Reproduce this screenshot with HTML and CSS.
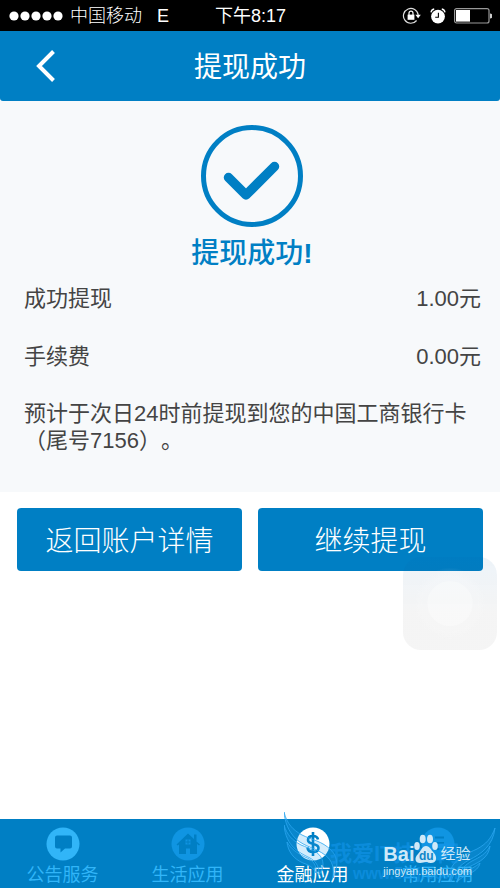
FILE: index.html
```html
<!DOCTYPE html>
<html lang="zh-CN">
<head>
<meta charset="utf-8">
<meta name="viewport" content="width=device-width, initial-scale=1">
<title>提现成功</title>
<link rel="stylesheet" href="styles.css">
</head>
<body>
<div class="status">
  <div class="status-left">
    <svg class="signal" viewBox="0 0 54 10" aria-hidden="true"><g fill="#fff"><circle cx="5" cy="5" r="4.6"/><circle cx="16" cy="5" r="4.6"/><circle cx="27" cy="5" r="4.6"/><circle cx="38" cy="5" r="4.6"/><circle cx="49" cy="5" r="4.6"/></g></svg>
    <span>中国移动</span>
    <span class="network">E</span>
  </div>
  <time class="clock">下午8:17</time>
  <div class="status-right">
    <svg class="lock" viewBox="0 0 20 18" aria-hidden="true"><path d="M14.600 13.500A7.400 7.400 0 1 1 16.200 8" fill="none" stroke="#ddd" stroke-width="1.200"/><path d="M13.400 7.800h5.400l-2.700 3.400z" fill="#fff"/><rect x="5.600" y="7.600" width="6.800" height="5.200" fill="#fff"/><path d="M7 8V6.200a2 2 0 0 1 4 0V8" fill="none" stroke="#fff" stroke-width="1.200"/></svg>
    <svg class="alarm" viewBox="0 0 16 16" aria-hidden="true"><circle cx="8" cy="8.600" r="6.900" fill="#fff"/><path d="M1 4.400A4 4 0 0 1 4.200 1M15 4.400A4 4 0 0 0 11.800 1" fill="none" stroke="#fff" stroke-width="1.300"/><path d="M8.400 4.800v4.400H5.200" fill="none" stroke="#000" stroke-width="1.100"/></svg>
    <svg class="battery" viewBox="0 0 38 16" aria-hidden="true"><rect x=".6" y=".6" width="34.400" height="14.400" rx="2" fill="none" stroke="#999" stroke-width="1.200"/><rect x="2" y="2" width="14" height="11.600" fill="#fff"/><path d="M36 5.500a2.500 2.500 0 0 1 0 5z" fill="#ccc"/></svg>
  </div>
</div>
<header class="header">
  <button class="back" type="button" aria-label="返回"><svg viewBox="0 0 20 32" aria-hidden="true"><path d="M17.500 1.500L3 16l14.500 14.500" fill="none" stroke="#fff" stroke-width="4"/></svg></button>
  <h1>提现成功</h1>
</header>
<main>
  <section class="panel">
    <div class="result">
      <svg class="check" viewBox="0 0 102 102" aria-hidden="true"><circle cx="51" cy="51" r="48.500" fill="none" stroke="#007fc4" stroke-width="5"/><path d="M27.500 52.500L45 70L73.500 41.500" fill="none" stroke="#007fc4" stroke-width="9.500" stroke-linecap="round" stroke-linejoin="round"/></svg>
      <h2>提现成功<b>!</b></h2>
    </div>
    <dl>
      <div class="row"><dt>成功提现</dt><dd>1.00元</dd></div>
      <div class="row"><dt>手续费</dt><dd>0.00元</dd></div>
    </dl>
    <p class="note">预计于次日24时前提现到您的中国工商银行卡（尾号7156）。</p>
  </section>
  <div class="actions">
    <button type="button">返回账户详情</button>
    <button type="button">继续提现</button>
    <div class="assist"></div>
  </div>
</main>
<nav class="tabs">
  <a href="#notice"><svg viewBox="0 0 34 34" aria-hidden="true"><circle cx="17" cy="17" r="16.500" fill="#31b5f8"/><path d="M11 8.500h13a2 2 0 0 1 2 2v9a2 2 0 0 1-2 2h-5l-4.500 4v-4H11a2 2 0 0 1-2-2v-9a2 2 0 0 1 2-2z" fill="#007fc4"/></svg><span>公告服务</span></a>
  <a href="#life"><svg viewBox="0 0 34 34" aria-hidden="true"><circle cx="17" cy="17" r="16.500" fill="#1095e2"/><path d="M5.500 17.500L17 6.500l6 5.500V7.500h2.500v7l3.500 3-1 1-2-1.500V27h-7v-5.500h-4V27H8v-9.500L6.500 18.500z" fill="#007fc4"/><path d="M14.500 12.500h5v5h-5z" fill="#1095e2"/><path d="M17 12.500v5M14.500 15h5" stroke="#007fc4"/></svg><span>生活应用</span></a>
  <a class="active" href="#finance"><svg viewBox="0 0 34 34" aria-hidden="true"><circle cx="17" cy="17" r="16.500" fill="#fff"/><path d="M22 12.500c-.5-2.500-2.500-3.500-5-3.500-3 0-5 1.500-5 4 0 5.500 10.500 2.500 10.500 8 0 2.500-2.200 4-5.500 4-3 0-5.200-1.500-5.500-4.500M17 5v24" fill="none" stroke="#007fc4" stroke-width="2.600"/></svg><span>金融应用</span></a>
  <a href="#common"><svg viewBox="0 0 34 34" aria-hidden="true"><circle cx="17" cy="17" r="16.500" fill="#1095e2"/><path d="M14 10.500h9M14 16h9M14 22h9" stroke="#007fc4" stroke-width="2"/></svg><span>常用应用</span></a>
  <div class="watermark" aria-hidden="true">
    <svg viewBox="0 0 216 74">
      <g fill="#2ba6f0" fill-opacity=".2" stroke="#2ba6f0" stroke-opacity=".8">
        <path d="M0 0C3 12 9 18 18 23c10 5 20 6 29 15 8 8 7 18 2 28 1-10 0-17-8-23-9-7-20-8-29-16C4 19 1 10 0 0z"/>
        <path d="M0 13c3 10 8 15 17 20 10 4 18 7 21 14 2 6 1 10-3 16 0-8-2-13-9-17C16 41 2 35 0 13z"/>
        <path d="M3 30c4 7 10 11 18 15 8 3 12 8 11 16-3-6-7-8-13-10C10 47 4 40 3 30z"/>
        <path d="M211 16c-4 11-9 16-18 21-9 4-19 9-24 16-3 5-4 10-2 17 3-11 9-17 18-22 12-6 24-14 26-32z"/>
        <path d="M206 34c-4 8-10 11-18 15-7 4-11 8-13 14 5-6 10-8 16-11 8-4 14-9 15-18z"/>
        <path d="M196 51c-5 4-9 6-14 8-5 3-8 6-9 11 5-5 8-6 12-8 6-3 10-6 11-11z"/>
      </g>
    </svg>
    <span class="site-name">我爱IT技术网</span>
    <span class="site-url">www.52ij.com</span>
  </div>
  <div class="credit" aria-hidden="true">
    <div class="brand"><span>Bai</span><svg viewBox="0 0 24 30"><g fill="#cfe9f8"><ellipse cx="3" cy="12" rx="2.800" ry="4"/><ellipse cx="8.700" cy="5" rx="3" ry="4.300"/><ellipse cx="16" cy="5" rx="3" ry="4.300"/><ellipse cx="21" cy="12" rx="2.800" ry="4"/><path d="M12 12c4 0 5 4 8 7 4 5 2 10-3 10-3 0-3-1-5-1s-3 1-6 1c-5 0-6-5-2-9 3-3 4-8 8-8z"/></g><text class="paw-text" x="5" y="26">du</text></svg><span class="brand-cn">经验</span></div>
    <div class="address">jingyan.baidu.com</div>
  </div>
</nav>
</body>
</html>
```
FILE: styles.css
```css
* { box-sizing: border-box; }
body {
  margin: 0;
  min-height: 100vh;
  display: flex;
  flex-direction: column;
  background: #fff;
  color: #444;
  font-family: "Liberation Sans", "Noto Sans CJK SC", sans-serif;
}
h1, h2, p, dl, dd { margin: 0; }
button { font: inherit; border: 0; padding: 0; color: #fff; }
svg { display: block; flex: none; }

.status {
  display: grid;
  grid-template-columns: 1fr auto 1fr;
  align-items: center;
  height: 31px;
  padding: 0 8px 0 9px;
  background: #000;
  color: #fff;
  font-size: 18px;
  line-height: 26px;
  font-weight: 300;
}
.status-left { display: flex; align-items: center; gap: 7px; }
.network { margin-left: 8px; }
.clock { font-weight: 400; }
.status-right { display: flex; justify-content: flex-end; align-items: center; gap: 8px; }
.signal { width: 54px; height: 10px; }
.lock { width: 20px; height: 18px; }
.alarm { width: 16px; height: 16px; }
.battery { width: 38px; height: 16px; }

.header {
  display: grid;
  grid-template-columns: 1fr auto 1fr;
  align-items: center;
  height: 70px;
  padding: 0 36px;
  background: #007fc4;
  border-radius: 0 0 3px 3px;
  color: #fff;
}
.back { width: 20px; background: none; }
h1, h2 { font-size: 28px; line-height: 40px; font-weight: 400; }
h1 { padding-top: 4px; }

main { flex: 1; }
.panel {
  padding: 24px 0 38px;
  background: #f7f9fb;
  font-size: 22px;
  line-height: 27px;
}
.result { padding: 0 16px 0 20px; }
.check { width: 102px; height: 102px; margin: 0 auto; }
h2 { margin: 7px 0 11px; color: #007fc4; font-weight: 500; text-align: center; }
.row { display: flex; justify-content: space-between; margin-bottom: 31px; }
.row:last-child { margin-bottom: 30px; }
.row, .note { padding: 0 19px 0 24px; }
.note { text-spacing-trim: space-all; }

.actions {
  position: relative;
  display: grid;
  grid-template-columns: 1fr 1fr;
  gap: 16px;
  padding: 16px 17px;
}
.actions button {
  height: 63px;
  padding-bottom: 2px;
  border-radius: 4px;
  background: #007fc4;
  font-size: 28px;
  font-weight: 300;
}
.assist {
  position: absolute;
  top: 65px;
  right: 3px;
  width: 94px;
  height: 93px;
  border-radius: 18px;
  background: radial-gradient(circle, rgba(255, 255, 255, .4) 0 22px, rgba(255, 255, 255, .15) 23px 28px, transparent 36px), linear-gradient(rgba(0, 90, 170, .07), rgba(80, 80, 80, .06) 60%);
}

.tabs {
  position: relative;
  display: grid;
  grid-template-columns: repeat(4, 1fr);
  height: 69px;
  padding-top: 8px;
  background: #007fc4;
}
.tabs a {
  display: flex;
  flex-direction: column;
  align-items: center;
  color: #31b5f8;
  font-size: 18px;
  line-height: 28px;
  text-decoration: none;
}
.tabs a > svg { width: 34px; height: 34px; }
.tabs .active { color: #fff; }

.watermark {
  position: absolute;
  right: 0;
  bottom: 2px;
  width: 216px;
  height: 74px;
  color: rgba(20, 150, 235, .6);
}
.watermark svg { position: absolute; inset: 0; }
.site-name { position: absolute; left: 46px; top: 28px; font-size: 22px; line-height: 28px; font-weight: 700; white-space: nowrap; }
.site-url { position: absolute; left: 69px; top: 52px; font-size: 16px; line-height: 20px; font-weight: 700; }
.credit {
  position: absolute;
  right: 28px;
  bottom: 9px;
  color: #cfe9f8;
}
.brand { display: flex; align-items: flex-end; font-size: 20px; line-height: 20px; font-weight: 700; }
.brand svg { width: 24px; height: 30px; }
.brand-cn { margin-left: 2px; font-size: 15px; font-weight: 400; }
.paw-text { fill: #0f86c8; font-size: 12px; }
.address { font-size: 11px; line-height: 15px; }
```
